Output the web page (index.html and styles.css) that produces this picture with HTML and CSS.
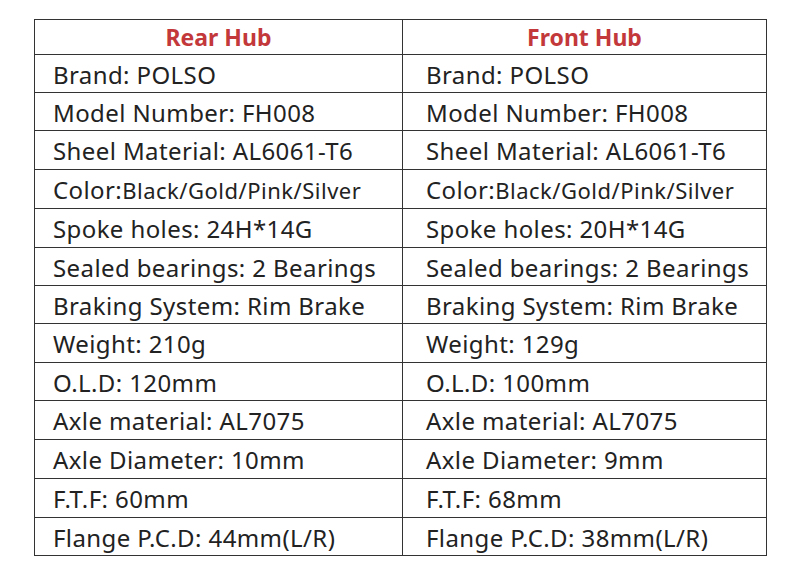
FILE: index.html
```html
<!DOCTYPE html>
<html>
<head>
<meta charset="utf-8">
<link rel="stylesheet" href="styles.css">
</head>
<body>
<div class="spec">
  <div class="cell head">Rear Hub</div>
  <div class="cell head">Front Hub</div>
  <div class="cell l">Brand: POLSO</div>
  <div class="cell r">Brand: POLSO</div>
  <div class="cell l">Model Number: FH008</div>
  <div class="cell r">Model Number: FH008</div>
  <div class="cell l">Sheel Material: AL6061-T6</div>
  <div class="cell r">Sheel Material: AL6061-T6</div>
  <div class="cell l">Color:<span class="sm">Black/Gold/Pink/Silver</span></div>
  <div class="cell r">Color:<span class="sm">Black/Gold/Pink/Silver</span></div>
  <div class="cell l">Spoke holes: 24H*14G</div>
  <div class="cell r">Spoke holes: 20H*14G</div>
  <div class="cell l">Sealed bearings: 2 Bearings</div>
  <div class="cell r">Sealed bearings: 2 Bearings</div>
  <div class="cell l">Braking System: Rim Brake</div>
  <div class="cell r">Braking System: Rim Brake</div>
  <div class="cell l">Weight: 210g</div>
  <div class="cell r">Weight: 129g</div>
  <div class="cell l">O.L.D: 120mm</div>
  <div class="cell r">O.L.D: 100mm</div>
  <div class="cell l">Axle material: AL7075</div>
  <div class="cell r">Axle material: AL7075</div>
  <div class="cell l">Axle Diameter: 10mm</div>
  <div class="cell r">Axle Diameter: 9mm</div>
  <div class="cell l">F.T.F: 60mm</div>
  <div class="cell r">F.T.F: 68mm</div>
  <div class="cell l">Flange P.C.D: 44mm(L/R)</div>
  <div class="cell r">Flange P.C.D: 38mm(L/R)</div>
</div>
</body>
</html>
```
FILE: styles.css
```css
html, body {
  margin: 0;
  padding: 0;
  background: #ffffff;
}
body {
  padding-top: 19px;
  padding-left: 34px;
}
.spec {
  width: 731px;
  display: grid;
  grid-template-columns: 367px 363px;
  grid-template-rows: 34px 37px 37px 38px 38px 38px 37px 37px 38px 37px 38px 38px 38px 37px;
  gap: 1px;
  background: #333333;
  border: 1px solid #333333;
  font-family: "Noto Sans", sans-serif;
  font-size: 24px;
  letter-spacing: 0.4px;
  color: #222222;
}
.cell {
  background: #ffffff;
  display: flex;
  align-items: center;
  white-space: nowrap;
  padding-top: 2px;
  line-height: 1;
}
.head {
  justify-content: center;
  color: #c3383a;
  font-weight: bold;
  font-size: 23px;
  letter-spacing: 0;
  padding-top: 0;
}
.l {
  padding-left: 18px;
}
.r {
  padding-left: 23px;
}
.sm {
  font-size: 22px;
  letter-spacing: 0.5px;
}
```
